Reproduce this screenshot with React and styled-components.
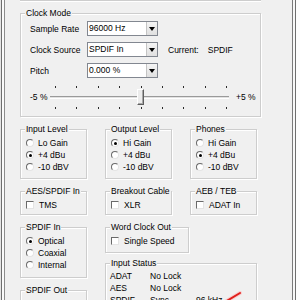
import React from 'react';
import styled, { createGlobalStyle } from 'styled-components';

const GlobalStyle = createGlobalStyle`
  html, body {
    margin: 0;
    padding: 0;
    background: #f0f0f0;
  }
  body {
    font-family: "Liberation Sans", Arial, sans-serif;
    font-size: 8.5px;
    color: #000;
  }
`;

const Window = styled.div`
  width: 300px;
  height: 300px;
  overflow: hidden;
  display: flex;
  background: #f0f0f0;
`;

const LeftEdge = styled.div`
  width: 5px;
  flex: none;
  background: linear-gradient(to right, #e4e4e4 0 1px, #6e6e6e 1px 2px, #fafafa 2px 4px, #8c8c8c 4px 5px);
`;

const RightEdge = styled.div`
  width: 13px;
  flex: none;
  background: linear-gradient(to right, #f0f0f0 0 1px, #7a7a7a 1px 2px, #f7f7f7 2px 4px, #6e6e6e 4px 5px, #fdfdfd 5px 9px, #7a7a7a 9px 10px, #e6e6e6 10px 13px);
`;

const Column = styled.div`
  flex: 1;
  padding: 0 30px 0 15px;
  display: flex;
  flex-direction: column;
  gap: 12px;
`;

const TopBox = styled.div`
  box-sizing: border-box;
  height: 1px;
  border-bottom: 1px solid #cdcdcd;
  box-shadow: 0 1px 0 #fff;
  flex: none;
`;

const Group = styled.div`
  box-sizing: border-box;
  position: relative;
  flex: none;
  height: ${p => p.$h}px;
  width: ${p => (p.$w ? `${p.$w}px` : 'auto')};
  border: 1px solid #cdcdcd;
  box-shadow: inset 1px 1px 0 #fff, 1px 1px 0 #fff;
`;

const Caption = styled.div`
  margin: -6px 0 0 4px;
  padding: 0 1px;
  width: fit-content;
  height: 10px;
  line-height: 10px;
  background: #f0f0f0;
  white-space: nowrap;
`;

const ComboGrid = styled.div`
  margin-top: 3px;
  padding-left: 9px;
  display: grid;
  grid-template-columns: 57px 71px auto;
  grid-auto-rows: 15px;
  row-gap: 6px;
  align-items: center;
`;

const FieldLabel = styled.span`
  white-space: nowrap;
`;

const Combo = styled.div`
  box-sizing: border-box;
  width: 71px;
  height: 15px;
  display: flex;
  border: 1px solid #828790;
  background: #fff;
`;

const ComboText = styled.span`
  flex: 1;
  padding-left: 1px;
  line-height: 13px;
  white-space: nowrap;
  overflow: hidden;
`;

const ComboButton = styled.span`
  width: 10px;
  display: flex;
  align-items: center;
  justify-content: center;
  background: linear-gradient(#f4f4f4, #e0e0e0);
  border-left: 1px solid #c4c4c4;
`;

const Arrow = styled.span`
  width: 0;
  height: 0;
  border-left: 3px solid transparent;
  border-right: 3px solid transparent;
  border-top: 4px solid #000;
`;

const Status = styled.div`
  display: flex;
  gap: 9px;
  margin-left: 10px;
  white-space: nowrap;
`;

const SliderRow = styled.div`
  margin-top: 6px;
  padding-left: 9px;
  display: flex;
  align-items: center;
  height: 25px;
`;

const SliderEnd = styled.span`
  width: ${p => p.$w}px;
  margin-left: ${p => p.$ml || 0}px;
  white-space: nowrap;
  margin-top: 1px;
`;

const SliderBody = styled.div`
  position: relative;
  width: 179px;
  height: 25px;
  display: flex;
  flex-direction: column;
`;

const TickRow = styled.div`
  margin-top: ${p => p.$mt}px;
  height: 2px;
  padding: 0 2px 0 5px;
  display: flex;
  justify-content: space-between;
`;

const Tick = styled.span`
  width: 1px;
  height: 2px;
  background: #2a2a2a;
`;

const Track = styled.div`
  margin-top: 8px;
  height: 3px;
  background: linear-gradient(#9a9a9a 0 1px, #e2e2e2 1px 2px, #fff 2px 3px);
`;

const Thumb = styled.div`
  position: absolute;
  top: 5px;
  box-sizing: border-box;
  width: 7px;
  height: 16px;
  background: #ececec;
  border: 1px solid;
  border-color: #fff #5e5e5e #5e5e5e #fff;
  box-shadow: inset -1px -1px 0 #a8a8a8;
`;

const ThreeCols = styled.div`
  display: grid;
  grid-template-columns: 67px 67px 67px;
  column-gap: 18px;
`;

const LowerGrid = styled.div`
  display: grid;
  grid-template-columns: 67px 152px;
  column-gap: 18px;
  align-items: start;
`;

const Stack = styled.div`
  display: flex;
  flex-direction: column;
  gap: ${p => p.$gap}px;
`;

const OptionList = styled.div`
  margin-top: 3px;
  padding-left: 5px;
  display: flex;
  flex-direction: column;
`;

const Option = styled.div`
  height: 12px;
  display: flex;
  align-items: center;
  gap: ${p => (p.$check ? 5 : 4)}px;
  white-space: nowrap;
`;

const Radio = styled.span`
  box-sizing: border-box;
  width: 8px;
  height: 8px;
  border-radius: 50%;
  border: 1px solid;
  border-color: #6a6a6a #e4e4e4 #e4e4e4 #6a6a6a;
  background: #fff;
  display: flex;
  align-items: center;
  justify-content: center;
  flex: none;

  &::after {
    content: '';
    width: 3px;
    height: 3px;
    border-radius: 50%;
    background: ${p => (p.$on ? '#000' : 'transparent')};
  }
`;

const Check = styled.span`
  box-sizing: border-box;
  width: 8px;
  height: 8px;
  border: 1px solid;
  border-color: #6a6a6a #e4e4e4 #e4e4e4 #6a6a6a;
  background: #fff;
  flex: none;
`;

const StatusGrid = styled.div`
  margin-top: 2px;
  padding-left: 4px;
  display: grid;
  grid-template-columns: 40px 46px auto;
  grid-auto-rows: 12px;
  align-items: center;
  white-space: nowrap;
`;

const PenMark = styled.svg`
  position: absolute;
  left: 116px;
  top: 26px;
  overflow: visible;
`;

const RadioGroup = ({ title, items, selected, h }) => (
  <Group $h={h}>
    <Caption>{title}</Caption>
    <OptionList>
      {items.map(it => (
        <Option key={it}>
          <Radio $on={it === selected} />
          {it}
        </Option>
      ))}
    </OptionList>
  </Group>
);

const CheckGroup = ({ title, label, h, w }) => (
  <Group $h={h} $w={w}>
    <Caption>{title}</Caption>
    <OptionList>
      <Option $check>
        <Check />
        {label}
      </Option>
    </OptionList>
  </Group>
);

const Select = ({ value }) => (
  <Combo>
    <ComboText>{value}</ComboText>
    <ComboButton>
      <Arrow />
    </ComboButton>
  </Combo>
);

const ticks = Array.from({ length: 9 }, (_, i) => i);
const gains = ['Lo Gain', '+4 dBu', '-10 dBV'];
const outGains = ['Hi Gain', '+4 dBu', '-10 dBV'];

export default function App() {
  const pitch = 0;
  const thumbLeft = Math.round(((pitch + 5) / 10) * 172) + 1;

  return (
    <>
      <GlobalStyle />
      <Window>
        <LeftEdge />
        <Column>
          <TopBox />

          <Group $h={104}>
            <Caption>Clock Mode</Caption>
            <ComboGrid>
              <FieldLabel>Sample Rate</FieldLabel>
              <Select value="96000 Hz" />
              <span />
              <FieldLabel>Clock Source</FieldLabel>
              <Select value="SPDIF In" />
              <Status>
                <span>Current:</span>
                <span>SPDIF</span>
              </Status>
              <FieldLabel>Pitch</FieldLabel>
              <Select value="0.000 %" />
              <span />
            </ComboGrid>
            <SliderRow>
              <SliderEnd $w={20}>-5 %</SliderEnd>
              <SliderBody>
                <TickRow $mt={2}>
                  {ticks.map(t => <Tick key={t} />)}
                </TickRow>
                <Track />
                <TickRow $mt={8}>
                  {ticks.map(t => <Tick key={t} />)}
                </TickRow>
                <Thumb style={{ left: thumbLeft }} />
              </SliderBody>
              <SliderEnd $w={24} $ml={7}>+5 %</SliderEnd>
            </SliderRow>
          </Group>

          <ThreeCols>
            <RadioGroup title="Input Level" items={gains} selected="+4 dBu" h={50} />
            <RadioGroup title="Output Level" items={outGains} selected="Hi Gain" h={50} />
            <RadioGroup title="Phones" items={outGains} selected="+4 dBu" h={50} />
          </ThreeCols>

          <ThreeCols>
            <CheckGroup title="AES/SPDIF In" label="TMS" h={24} />
            <CheckGroup title="Breakout Cable" label="XLR" h={24} />
            <CheckGroup title="AEB / TEB" label="ADAT In" h={24} />
          </ThreeCols>

          <LowerGrid>
            <Stack $gap={12}>
              <RadioGroup title="SPDIF In" items={['Optical', 'Coaxial', 'Internal']} selected="Optical" h={51} />
              <CheckGroup title="SPDIF Out" label="Consumer" h={40} />
            </Stack>
            <Stack $gap={10}>
              <CheckGroup title="Word Clock Out" label="Single Speed" h={26} w={84} />
              <Group $h={60}>
                <Caption>Input Status</Caption>
                <StatusGrid>
                  <span>ADAT</span>
                  <span>No Lock</span>
                  <span />
                  <span>AES</span>
                  <span>No Lock</span>
                  <span />
                  <span>SPDIF</span>
                  <span>Sync</span>
                  <span>96 kHz</span>
                </StatusGrid>
                <PenMark width="20" height="14" viewBox="0 0 20 14">
                  <line x1="3" y1="12" x2="18" y2="3" stroke="#ffb0b0" strokeWidth="4" strokeLinecap="round" opacity="0.5" />
                  <line x1="3" y1="12" x2="18" y2="3" stroke="#e0201c" strokeWidth="2" strokeLinecap="round" />
                </PenMark>
              </Group>
            </Stack>
          </LowerGrid>
        </Column>
        <RightEdge />
      </Window>
    </>
  );
}
